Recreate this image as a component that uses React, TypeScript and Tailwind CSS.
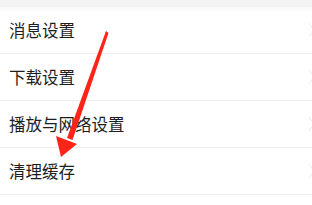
import React from 'react';

// Settings list with a red annotation arrow pointing at the cache item
const items = ['消息设置', '下载设置', '播放与网络设置', '清理缓存'];

function Chevron() {
  return (
    <svg width="8" height="16" viewBox="0 0 8 16" className="shrink-0">
      <path d="M1 1 L6 8 L1 15" fill="none" stroke="#ececec" strokeWidth="1" />
    </svg>
  );
}

export default function App() {
  return (
    <div
      className="relative w-[312px] h-[205px] overflow-hidden bg-white"
      style={{ fontFamily: '"Noto Sans CJK SC", "Noto Sans", sans-serif' }}
    >
      <div className="h-[7px] bg-[#f3f3f3]" />
      <div className="h-[5px] -mb-[5px] bg-gradient-to-b from-[#f8f8f8] to-white" />
      <div className="flex flex-col">
        {items.map((label) => (
          <div key={label} className="flex items-center h-[47px] pl-[9px] border-b border-[#efefef]">
            <span className="flex-1 text-[16.5px] leading-none text-[#1e1e1e]">{label}</span>
            <div className="w-[8px] mr-[-4px]">
              <Chevron />
            </div>
          </div>
        ))}
      </div>

      {/* annotation arrow */}
      <svg className="absolute left-0 top-0 pointer-events-none" width="312" height="205" viewBox="0 0 312 205">
        <polygon points="106,31 108.5,33 72.5,140 67,138" fill="#ff2418" />
        <polygon points="61,157 56,136 77,144" fill="#ff2418" />
      </svg>
    </div>
  );
}
